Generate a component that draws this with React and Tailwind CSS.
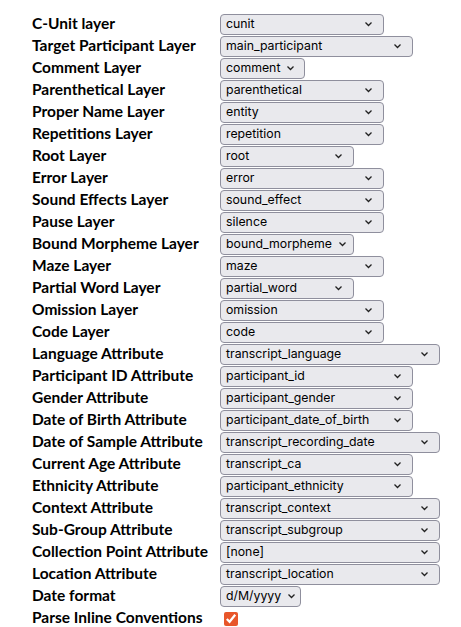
import { useState } from "react";

const rows = [
	["C-Unit layer", "cunit", 164],
	["Target Participant Layer", "main_participant", 193],
	["Comment Layer", "comment", 85],
	["Parenthetical Layer", "parenthetical", 164],
	["Proper Name Layer", "entity", 164],
	["Repetitions Layer", "repetition", 164],
	["Root Layer", "root", 134],
	["Error Layer", "error", 164],
	["Sound Effects Layer", "sound_effect", 164],
	["Pause Layer", "silence", 164],
	["Bound Morpheme Layer", "bound_morpheme", 134],
	["Maze Layer", "maze", 164],
	["Partial Word Layer", "partial_word", 134],
	["Omission Layer", "omission", 164],
	["Code Layer", "code", 164],
	["Language Attribute", "transcript_language", 220],
	["Participant ID Attribute", "participant_id", 193],
	["Gender Attribute", "participant_gender", 193],
	["Date of Birth Attribute", "participant_date_of_birth", 193],
	["Date of Sample Attribute", "transcript_recording_date", 220],
	["Current Age Attribute", "transcript_ca", 193],
	["Ethnicity Attribute", "participant_ethnicity", 193],
	["Context Attribute", "transcript_context", 220],
	["Sub-Group Attribute", "transcript_subgroup", 220],
	["Collection Point Attribute", "[none]", 220],
	["Location Attribute", "transcript_location", 220],
	["Date format", "d/M/yyyy", 81],
];

const Chevron = () => (
	<svg width="9" height="6" viewBox="0 0 9 6" className="shrink-0 ml-[6px]">
		<path d="M1.5 1.5 L4.5 4.5 L7.5 1.5" fill="none" stroke="#222" strokeWidth="1.3" />
	</svg>
);

const App = () => {
	const [parse, setParse] = useState(true);
	return (
		<div className="pt-[13px] pl-[32px] text-black">
			{rows.map(([label, value, width]) => (
				<div key={label} className="flex items-center h-[22px]">
					<div className="w-[188px] whitespace-nowrap font-bold text-[15.5px] leading-[18px] -mt-[2px]" style={{ fontFamily: "Lato, sans-serif" }}>
						{label}
					</div>
					<div
						className="h-[21px] flex items-center justify-between pl-[5px] pr-[10px] bg-[#e9e9ed] border border-[#8f8f9d] rounded-[4px] text-[12.3px]"
						style={{ width: width, fontFamily: "Inter, sans-serif" }}>
						<span className="whitespace-nowrap">{value}</span>
						<Chevron />
					</div>
				</div>
			))}
			<div className="flex items-center h-[22px]">
				<div className="w-[188px] whitespace-nowrap font-bold text-[15.5px] leading-[18px] -mt-[2px]" style={{ fontFamily: "Lato, sans-serif" }}>
					Parse Inline Conventions
				</div>
				<input type="checkbox" checked={parse} onChange={(e) => setParse(e.target.checked)} className="ml-[4px] mt-[2px] w-[14px] h-[14px] accent-[#e8562a]" />
			</div>
		</div>
	);
};

export default App;
